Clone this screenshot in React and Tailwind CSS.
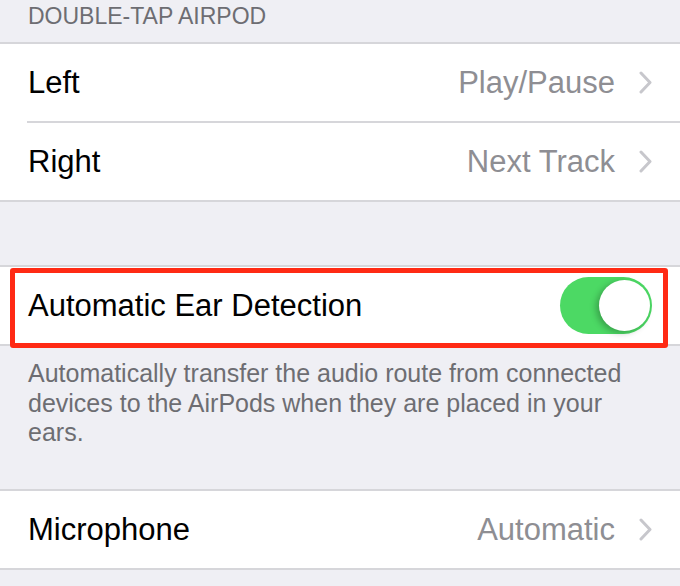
import React from "react";

const Chevron = () => (
  <svg width="13" height="23" viewBox="0 0 13 23" className="shrink-0">
    <polyline
      points="2,2 11,11.5 2,21"
      fill="none"
      stroke="#c7c7cc"
      strokeWidth="3"
      strokeLinecap="round"
      strokeLinejoin="round"
    />
  </svg>
);

const Separator = ({ inset }) => (
  <div className={`h-[2px] bg-white ${inset ? "pl-[27px]" : ""}`}>
    <div className="h-full bg-[#d6d6da]" />
  </div>
);

const NavRow = ({ label, value }) => (
  <div className="flex h-[77px] items-center justify-between bg-white pl-[28px] pr-[28px]">
    <span className="text-[31px] leading-none text-black">{label}</span>
    <div className="flex items-center gap-[24px]">
      <span className="text-[31px] leading-none text-[#8e8e93]">{value}</span>
      <Chevron />
    </div>
  </div>
);

const Toggle = () => (
  <div className="relative h-[57px] w-[92px] rounded-full bg-[#4cd964]">
    <div className="absolute right-[2px] top-[3px] h-[51px] w-[51px] rounded-full bg-white shadow-[-3px_2px_6px_rgba(0,0,0,0.25)]" />
  </div>
);

export default function App() {
  return (
    <div
      className="min-h-[586px] w-[680px] bg-[#efeff4]"
      style={{ fontFamily: '"Liberation Sans", Arial, sans-serif' }}
    >
      {/* section header */}
      <div className="h-[42px] pl-[28px] pt-[5px] text-[23px] leading-none text-[#6d6d72]">
        DOUBLE-TAP AIRPOD
      </div>
      <Separator />
      <NavRow label="Left" value="Play/Pause" />
      <Separator inset />
      <NavRow label="Right" value="Next Track" />
      <Separator />

      <div className="h-[63px]" />

      <Separator />
      <div className="relative z-10 flex h-[77px] items-center justify-between bg-white pl-[28px] pr-[28px]">
        <span className="text-[31px] leading-none text-black">
          Automatic Ear Detection
        </span>
        <Toggle />
        <div className="pointer-events-none absolute left-[10px] right-[12px] top-[1px] -bottom-[4px] rounded-[3px] border-[5px] border-[#ff2a14]" />
      </div>
      <Separator />

      {/* footer note */}
      <div className="h-[143px] pl-[28px] pr-[48px] pt-[13px] text-[25px] leading-[29.5px] text-[#6d6d72]">
        Automatically transfer the audio route from connected devices to the
        AirPods when they are placed in your ears.
      </div>

      <Separator />
      <NavRow label="Microphone" value="Automatic" />
      <Separator />
    </div>
  );
}
